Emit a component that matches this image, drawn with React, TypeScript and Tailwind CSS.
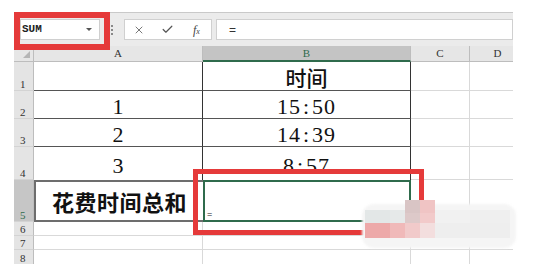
import { Check, X } from "lucide-react";

type Row = {
  n: string;
  h: string;
  a?: string;
  b?: string;
  kind: "head" | "num" | "total" | "blank";
};

const rows: Row[] = [
  { n: "1", h: "h-[29px]", b: "时间", kind: "head" },
  { n: "2", h: "h-[28px]", a: "1", b: "15:50", kind: "num" },
  { n: "3", h: "h-[28px]", a: "2", b: "14:39", kind: "num" },
  { n: "4", h: "h-[33px]", a: "3", b: "8:57", kind: "num" },
  { n: "5", h: "h-[42px]", a: "花费时间总和", b: "=", kind: "total" },
  { n: "6", h: "h-[14px]", kind: "blank" },
  { n: "7", h: "h-[14px]", kind: "blank" },
  { n: "8", h: "h-[14px]", kind: "blank" },
];

const serif = "font-['Liberation_Serif',serif]";
const cjk = "font-['Noto_Sans_CJK_SC','Noto_Sans',sans-serif]";

function Time({ value }: { value: string }) {
  const [h, m] = value.split(":");
  return (
    <span className={`${serif} text-[22px] leading-[22px] tracking-[1px] text-[#111]`}>
      {h}
      <span className="mx-[2px]">:</span>
      {m}
    </span>
  );
}

function GridRow({ row, last }: { row: Row; last: boolean }) {
  const selected = row.kind === "total";
  const table = row.kind !== "blank" && row.kind !== "total";
  const lineB = last ? "" : "border-b border-[#d9d9d9]";

  let cellA = "";
  let cellB = "";
  if (table) {
    const bottom = row.n === "4" ? "" : "border-b-[1.5px] border-b-[#555]";
    cellA = `${bottom} border-r border-r-[#333]`;
    cellB = `${bottom} border-r border-r-[#333]`;
  } else if (selected) {
    cellA = "border-2 border-r-0 border-[#6d6d6d]";
    cellB = "border-2 border-[#2f6b4c]";
  } else {
    cellA = `${lineB} border-r border-r-[#d9d9d9]`;
    cellB = `${lineB} border-r border-r-[#d9d9d9]`;
  }

  const align =
    row.kind === "num"
      ? row.n === "4"
        ? "items-end justify-center pb-[3px]"
        : "items-end justify-center"
      : row.kind === "head"
        ? "items-end justify-center pb-[2px]"
        : "items-center justify-center";

  return (
    <div className={`flex ${row.h}`}>
      <div
        className={`w-[20px] flex items-end pl-[6px] border-r border-[#bdbdbd] ${
          selected ? "bg-[#c6c6c6] text-[#2f6b4c]" : "bg-[#e4e4e4] text-[#333]"
        } ${last ? "" : "border-b border-b-[#d3d3d3]"} ${serif} text-[11px] leading-[12px]`}
      >
        {row.n}
      </div>
      <div className={`w-[169px] flex ${align} ${cellA}`}>
        {row.kind === "num" && (
          <span className={`${serif} text-[22px] leading-[22px] text-[#111]`}>{row.a}</span>
        )}
        {row.kind === "total" && (
          <span className={`${cjk} text-[22px] leading-[24px] font-bold tracking-[0.5px] text-[#111]`}>
            {row.a}
          </span>
        )}
      </div>
      <div
        className={`w-[208px] flex ${
          selected ? "items-end justify-start pl-[2px] pb-[1px]" : align
        } ${cellB}`}
      >
        {row.kind === "head" && (
          <span className={`${cjk} text-[21px] leading-[22px] font-medium text-[#111]`}>{row.b}</span>
        )}
        {row.kind === "num" && row.b && <Time value={row.b} />}
        {selected && <span className="text-[9px] leading-[9px] text-[#222]">=</span>}
      </div>
      <div className={`w-[59px] ${lineB} border-r border-r-[#d9d9d9]`} />
      <div className={`w-[43px] ${lineB}`} />
    </div>
  );
}

export default function App() {
  return (
    <div className="relative w-[537px] h-[264px] overflow-hidden bg-white font-['Liberation_Sans',sans-serif]">
      <div className="pt-3 pl-[14px]">
        <div className="w-[499px]">
          {/* formula bar */}
          <div className="flex h-[34px] items-center border-t border-[#c9c9c9] bg-[#ebebeb]">
            <div className="ml-[6px] flex h-[21px] w-[80px] items-center justify-between border border-[#cfcfcf] bg-white pl-[1px] pr-[7px]">
              <span className="font-['Liberation_Mono',monospace] text-[11px] font-bold text-[#222]">SUM</span>
              <span className="h-0 w-0 border-x-[3px] border-t-[3px] border-x-transparent border-t-[#555]" />
            </div>
            <div className="ml-[11px] flex flex-col gap-[2px]">
              <span className="h-[2px] w-[2px] bg-[#888]" />
              <span className="h-[2px] w-[2px] bg-[#888]" />
              <span className="h-[2px] w-[2px] bg-[#888]" />
            </div>
            <div className="ml-[11px] flex h-[21px] w-[88px] items-center border border-[#d0d0d0] bg-white text-[#555]">
              <X size={12} strokeWidth={1.6} className="ml-[8px]" />
              <Check size={13} strokeWidth={2.2} className="ml-[16px]" />
              <span className={`${serif} ml-[19px] text-[12px] italic leading-none text-[#444]`}>
                f<span className="text-[8px]">x</span>
              </span>
            </div>
            <div className="ml-[4px] flex h-[21px] flex-1 items-center border border-[#d0d0d0] bg-white pl-[12px] text-[12px] text-[#333]">
              =
            </div>
          </div>

          {/* column headers */}
          <div className={`flex h-[16px] bg-[#e6e6e6] ${serif} text-[11px] leading-none text-[#333]`}>
            <div className="relative w-[20px] border-b border-r border-[#bdbdbd]">
              <span className="absolute bottom-[3px] right-[3px] h-0 w-0 border-b-[7px] border-l-[7px] border-b-[#b5b5b5] border-l-transparent" />
            </div>
            <div className="flex w-[169px] items-end justify-center border-b border-r border-[#bdbdbd] pb-[2px]">A</div>
            <div className="flex w-[208px] items-end justify-center border-b-2 border-r border-b-[#2f6b4c] border-r-[#bdbdbd] bg-[#c4c4c4] pb-[1px] text-[#2f6b4c]">
              B
            </div>
            <div className="flex w-[59px] items-end justify-center border-b border-r border-[#bdbdbd] pb-[2px]">C</div>
            <div className="flex w-[43px] items-end justify-center border-b border-[#bdbdbd] pb-[2px] pl-[12px]">D</div>
          </div>

          {rows.map((r, i) => (
            <GridRow key={r.n} row={r} last={i === rows.length - 1} />
          ))}
        </div>
      </div>

      {/* highlight boxes */}
      <div className="absolute left-[14px] top-[12px] h-[38px] w-[96px] border-[6px] border-[#e53a3a]" />
      <div className="absolute left-[193px] top-[169px] h-[66px] w-[231px] border-[5px] border-[#e53a3a]" />

      {/* blurred watermark */}
      <div className="absolute left-[362px] top-[204px] h-[44px] w-[154px] rounded-[12px] bg-[#f5f5f5] blur-[1px]" />
      <div className="absolute left-[405px] top-[200px] h-[13px] w-[15px] bg-[#d9c5c5]" />
      <div className="absolute left-[420px] top-[200px] h-[13px] w-[15px] bg-[#f0c4c4]" />
      <div className="absolute left-[365px] top-[210px] h-[13px] w-[25px] bg-[#e3e7e7]" />
      <div className="absolute left-[390px] top-[210px] h-[13px] w-[15px] bg-[#e6e9e9]" />
      <div className="absolute left-[405px] top-[213px] h-[10px] w-[15px] bg-[#ddc9c9]" />
      <div className="absolute left-[420px] top-[213px] h-[10px] w-[15px] bg-[#f2caca]" />
      <div className="absolute left-[435px] top-[210px] h-[13px] w-[35px] bg-[#f1f1f1]" />
      <div className="absolute left-[470px] top-[210px] h-[13px] w-[40px] bg-[#efefef]" />
      <div className="absolute left-[365px] top-[223px] h-[15px] w-[25px] bg-[#eda9a9]" />
      <div className="absolute left-[390px] top-[223px] h-[15px] w-[15px] bg-[#f0b9b9]" />
      <div className="absolute left-[405px] top-[223px] h-[15px] w-[15px] bg-[#f1caca]" />
      <div className="absolute left-[420px] top-[223px] h-[15px] w-[15px] bg-[#f3dede]" />
      <div className="absolute left-[435px] top-[223px] h-[15px] w-[75px] bg-[#eeeeee]" />
    </div>
  );
}
